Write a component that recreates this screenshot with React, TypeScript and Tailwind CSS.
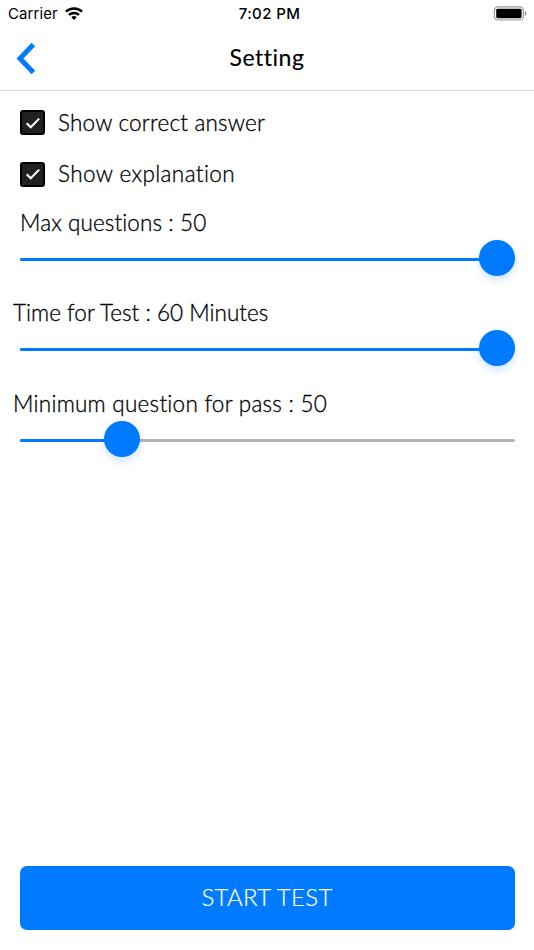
import { FC } from "react";

interface SliderRowProps {
  label: string;
  percent: number;
  labelClass: string;
}

const StatusBar: FC = () => {
  return (
    <div className="grid h-7 grid-cols-3 items-center pl-2 pr-[7px] font-['Inter',sans-serif] text-[15px]">
      <div className="flex items-center gap-[7px]">
        <span className="tracking-[0.1px]">Carrier</span>
        <svg viewBox="0 0 18 13" className="h-[13px] w-[18px] -translate-y-px" fill="none" stroke="#000" strokeWidth="2.5">
          <path d="M0.9 4.7C5.4 0.3 12.6 0.3 17.1 4.7" />
          <path d="M4 7.9C6.8 5.2 11.2 5.2 14 7.9" />
          <path d="M6.3 10.2C7.8 8.7 10.2 8.7 11.7 10.2L9 12.9Z" fill="#000" stroke="none" />
        </svg>
      </div>
      <span className="whitespace-nowrap pl-1 text-center font-medium tracking-[0.4px]">7:02 PM</span>
      <svg viewBox="0 0 34 15" className="h-[15px] w-[34px] -translate-y-px justify-self-end">
        <rect x="1.4" y="0.8" width="29" height="13.2" rx="3.6" fill="none" stroke="#999" strokeWidth="1.2" />
        <rect x="3.2" y="2.8" width="25.4" height="9.4" rx="1.4" />
        <path d="M31.8 5.2C34 5.9 34 9 31.8 9.7Z" fill="#888" />
      </svg>
    </div>
  );
};

const CheckRow: FC<{ label: string; labelClass: string }> = ({ label, labelClass }) => {
  return (
    <label className="flex h-[51.5px] items-center gap-[13px] pl-5">
      <span className="flex size-[25px] items-center justify-center rounded-[3px] border-2 border-black bg-[#202020]">
        <svg viewBox="0 0 16 16" className="size-4 shrink-0" fill="none" stroke="#fff" strokeWidth="2">
          <path d="M1.7 8.3l4 4L14.2 3.6" />
        </svg>
      </span>
      <span className={labelClass}>{label}</span>
    </label>
  );
};

const SliderRow: FC<SliderRowProps> = ({ label, percent, labelClass }) => {
  return (
    <div className="h-[90.3px]">
      <p className={labelClass}>{label}</p>
      <div className="relative ml-5 mr-[19px] mt-5 h-[3px] rounded-full bg-[#b3b3b3]">
        <div className="h-full rounded-full bg-[#007aff]" style={{ width: `${percent}%` }} />
        <div
          className="absolute -top-[18px] size-9 rounded-full bg-[#007aff] shadow-[0_4px_8px_rgba(0,122,255,0.2)]"
          style={{ left: `calc((100% - 36px) * ${percent / 100})` }}
        />
      </div>
    </div>
  );
};

export default function App() {
  return (
    <div className="flex h-[950px] w-[534px] flex-col overflow-hidden bg-white font-['Lato',sans-serif] text-[22.5px] text-black">
      <StatusBar />
      <header className="grid h-[63px] grid-cols-[60px_1fr_60px] items-center border-b border-[#d5d5d5]">
        <svg viewBox="0 0 20 32" className="ml-4 h-8 w-5 -translate-y-[0.5px]" fill="none" stroke="#007aff" strokeWidth="5">
          <path d="M17.4 2L4 16L17.4 30" />
        </svg>
        <h1 className="-translate-y-[2px] text-center text-[23px] leading-[30px] tracking-[0.5px] [-webkit-text-stroke:0.15px]">Setting</h1>
      </header>

      <main className="flex-1 pt-1.5 font-light [-webkit-text-stroke:0.3px]">
        <CheckRow label="Show correct answer" labelClass="tracking-[0.2px]" />
        <CheckRow label="Show explanation" labelClass="tracking-[0.4px]" />
        <div className="pt-2">
          <SliderRow label="Max questions : 50" percent={100} labelClass="pl-5 leading-[30px] tracking-[0.1px]" />
          <SliderRow label="Time for Test : 60 Minutes" percent={100} labelClass="pl-[13px] leading-[30px] tracking-[0.03px]" />
          <SliderRow label="Minimum question for pass : 50" percent={18.3} labelClass="pl-[13px] leading-[30px] tracking-[0.25px]" />
        </div>
      </main>

      <footer className="px-[19.5px] pb-5">
        <button className="h-16 w-full rounded-[7px] bg-[#007aff] pb-0.5 text-[24px] font-light tracking-[0.3px] text-white [-webkit-text-stroke:0.2px]">START TEST</button>
      </footer>
    </div>
  );
}
